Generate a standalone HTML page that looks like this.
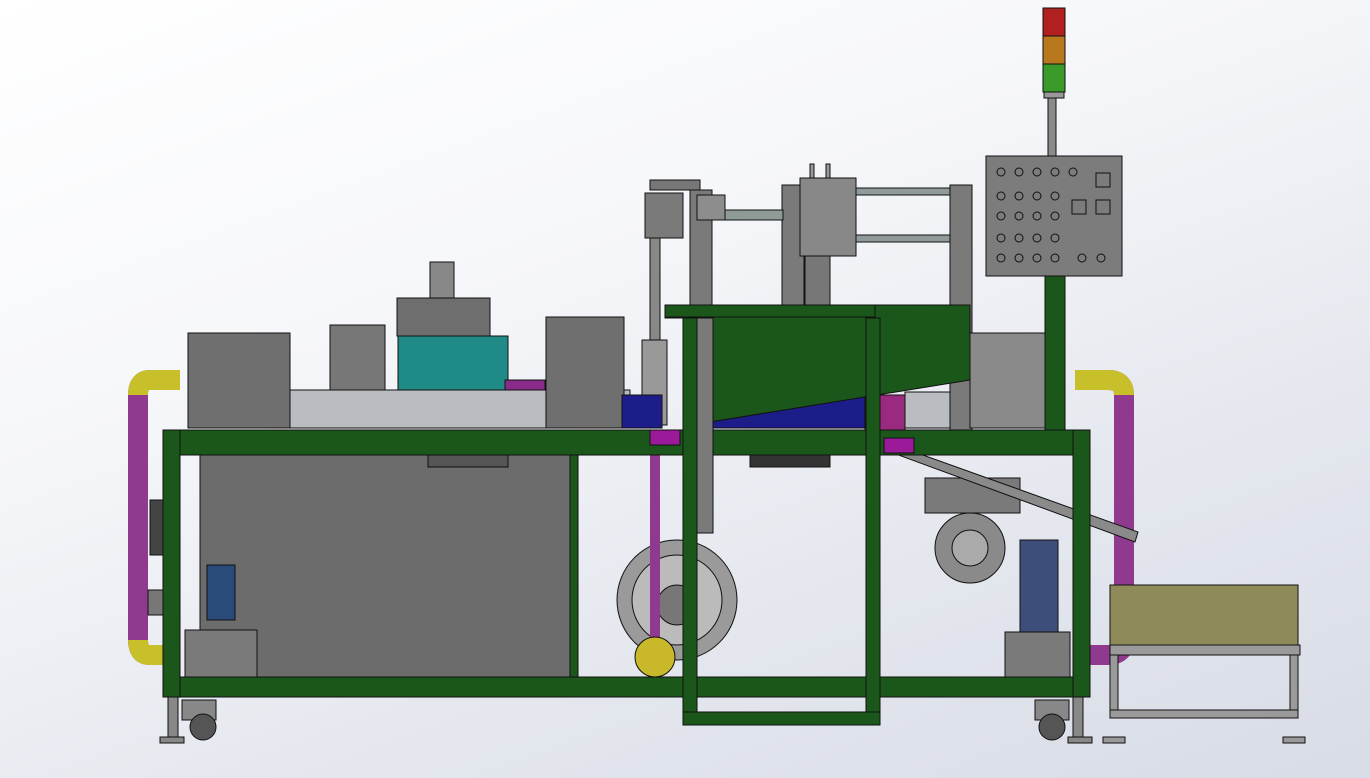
<!DOCTYPE html>
<html><head><style>
html,body{margin:0;padding:0;width:1370px;height:778px;overflow:hidden}
body{background:linear-gradient(160deg,#ffffff 0%,#f6f7fa 35%,#e4e7ee 70%,#d8dce6 100%)}
svg{position:absolute;left:0;top:0}
</style></head><body>
<svg width="1370" height="778" viewBox="0 0 1370 778" xmlns="http://www.w3.org/2000/svg" stroke="#111" stroke-width="1">
<!-- signal tower -->
<rect x="1048" y="95" width="8" height="62" fill="#8a8a8a"/>
<rect x="1043" y="8" width="22" height="28" fill="#b0201e"/>
<rect x="1043" y="36" width="22" height="28" fill="#b8781e"/>
<rect x="1043" y="64" width="22" height="28" fill="#3a9a2a"/>
<rect x="1044" y="92" width="20" height="6" fill="#999"/>
<!-- control panel -->
<rect x="986" y="156" width="136" height="120" fill="#7c7c7c"/>
<g fill="none" stroke="#111">
<circle cx="1001" cy="172" r="4"/><circle cx="1019" cy="172" r="4"/><circle cx="1037" cy="172" r="4"/><circle cx="1055" cy="172" r="4"/><circle cx="1073" cy="172" r="4"/>
<circle cx="1001" cy="196" r="4"/><circle cx="1019" cy="196" r="4"/><circle cx="1037" cy="196" r="4"/><circle cx="1055" cy="196" r="4"/>
<circle cx="1001" cy="216" r="4"/><circle cx="1019" cy="216" r="4"/><circle cx="1037" cy="216" r="4"/><circle cx="1055" cy="216" r="4"/>
<circle cx="1001" cy="238" r="4"/><circle cx="1019" cy="238" r="4"/><circle cx="1037" cy="238" r="4"/><circle cx="1055" cy="238" r="4"/>
<circle cx="1001" cy="258" r="4"/><circle cx="1019" cy="258" r="4"/><circle cx="1037" cy="258" r="4"/><circle cx="1055" cy="258" r="4"/><circle cx="1082" cy="258" r="4"/><circle cx="1101" cy="258" r="4"/>
<rect x="1096" y="173" width="14" height="14"/><rect x="1072" y="200" width="14" height="14"/><rect x="1096" y="200" width="14" height="14"/>
</g>
<rect x="1045" y="276" width="20" height="154" fill="#1b561b"/>
<!-- upper mechanism -->
<rect x="950" y="185" width="22" height="245" fill="#7a7a7a"/>
<rect x="782" y="185" width="22" height="120" fill="#7a7a7a"/>
<rect x="855" y="188" width="95" height="7" fill="#909a9a"/>
<rect x="855" y="235" width="95" height="7" fill="#909a9a"/>
<rect x="800" y="178" width="56" height="78" fill="#888"/>
<rect x="805" y="256" width="25" height="50" fill="#777"/>
<rect x="810" y="164" width="4" height="14" fill="#999"/><rect x="826" y="164" width="4" height="14" fill="#999"/>
<rect x="725" y="210" width="58" height="10" fill="#8f9b97"/>
<rect x="645" y="193" width="38" height="45" fill="#7a7a7a"/>
<rect x="690" y="190" width="22" height="115" fill="#7a7a7a"/>
<rect x="697" y="195" width="28" height="25" fill="#8d8d8d"/>
<rect x="650" y="180" width="50" height="10" fill="#777"/>
<rect x="650" y="238" width="10" height="180" fill="#888"/>
<rect x="642" y="340" width="25" height="85" fill="#999"/>
<!-- left top modules -->
<rect x="430" y="262" width="24" height="36" fill="#888"/>
<rect x="397" y="298" width="93" height="38" fill="#6e6e6e"/>
<rect x="398" y="336" width="110" height="55" fill="#1f8a86"/>
<rect x="330" y="325" width="55" height="100" fill="#777"/>
<rect x="290" y="390" width="340" height="38" fill="#b9bcc0"/>
<rect x="505" y="380" width="40" height="10" fill="#8a2a8a"/>
<rect x="188" y="333" width="102" height="95" fill="#6f6f6f"/>
<rect x="546" y="317" width="78" height="111" fill="#6f6f6f"/>
<rect x="622" y="395" width="40" height="33" fill="#1d1d8a"/>
<rect x="700" y="395" width="250" height="33" fill="#1d1d8a"/>
<rect x="865" y="395" width="40" height="35" fill="#9a2a80"/>
<rect x="970" y="333" width="75" height="95" fill="#8a8a8a"/>
<rect x="905" y="392" width="45" height="36" fill="#b9bcc0"/>
<!-- hopper -->
<polygon points="665,305 970,305 970,380 710,422 700,318 665,318" fill="#1b561b"/>
<rect x="665" y="305" width="210" height="12" fill="#1b561b"/>
<!-- pipes left -->
<path d="M180,380 L150,380 Q138,380 138,395 L138,640 Q138,655 150,655 L180,655" fill="none" stroke="#8f3a8f" stroke-width="20"/>
<path d="M180,380 L150,380 Q138,380 138,395" fill="none" stroke="#c8c02a" stroke-width="20"/>
<path d="M138,640 Q138,655 150,655 L180,655" fill="none" stroke="#c8c02a" stroke-width="20"/>
<!-- pipes right -->
<path d="M1075,380 L1108,380 Q1124,380 1124,395 L1124,640 Q1124,655 1108,655 L1090,655" fill="none" stroke="#8f3a8f" stroke-width="20"/>
<path d="M1075,380 L1108,380 Q1124,380 1124,395" fill="none" stroke="#c8c02a" stroke-width="20"/>
<!-- cabinet -->
<rect x="200" y="455" width="370" height="222" fill="#6c6c6c"/>
<rect x="185" y="630" width="72" height="47" fill="#7a7a7a"/>
<rect x="207" y="565" width="28" height="55" fill="#2a4a7a"/>
<rect x="150" y="500" width="14" height="55" fill="#444"/>
<rect x="148" y="590" width="16" height="25" fill="#777"/>
<!-- blower -->
<circle cx="677" cy="600" r="60" fill="#9a9a9a"/>
<circle cx="677" cy="600" r="45" fill="#bbb"/>
<circle cx="677" cy="605" r="20" fill="#777"/>
<rect x="650" y="455" width="10" height="200" fill="#8f3a8f" stroke="none"/>
<circle cx="655" cy="657" r="20" fill="#c8b82a"/>
<!-- right motor & chute -->
<rect x="925" y="478" width="95" height="35" fill="#7a7a7a"/>
<circle cx="970" cy="548" r="35" fill="#8a8a8a"/>
<circle cx="970" cy="548" r="18" fill="#aaa"/>
<rect x="1020" y="540" width="38" height="92" fill="#3e4e7a"/>
<polygon points="885,450 895,445 1138,532 1135,542" fill="#8a8a8a"/>
<rect x="1005" y="632" width="65" height="45" fill="#7a7a7a"/>
<rect x="750" y="455" width="80" height="12" fill="#333"/>
<rect x="428" y="455" width="80" height="12" fill="#555"/>
<!-- green frame -->
<g fill="#1b561b">
<rect x="163" y="430" width="927" height="25"/>
<rect x="163" y="677" width="927" height="20"/>
<rect x="163" y="430" width="17" height="267"/>
<rect x="1073" y="430" width="17" height="267"/>
<rect x="570" y="455" width="8" height="222"/>
<rect x="683" y="318" width="14" height="407"/>
<rect x="866" y="318" width="14" height="407"/>
<rect x="683" y="712" width="197" height="13"/>
</g>
<rect x="697" y="318" width="16" height="215" fill="#7a7a7a"/>
<rect x="650" y="430" width="30" height="15" fill="#9a1a9a"/>
<rect x="884" y="438" width="30" height="15" fill="#9a1a9a"/>
<!-- casters -->
<g fill="#888">
<rect x="168" y="697" width="10" height="40"/><rect x="182" y="700" width="34" height="20"/>
<circle cx="203" cy="727" r="13" fill="#555"/><rect x="160" y="737" width="24" height="6"/>
<rect x="1073" y="697" width="10" height="40"/><rect x="1035" y="700" width="34" height="20"/>
<circle cx="1052" cy="727" r="13" fill="#555"/><rect x="1068" y="737" width="24" height="6"/>
</g>
<!-- bin -->
<rect x="1110" y="585" width="188" height="60" fill="#8f8a5a"/>
<rect x="1110" y="645" width="190" height="10" fill="#9a9a9a"/>
<rect x="1110" y="655" width="8" height="60" fill="#9a9a9a"/>
<rect x="1290" y="655" width="8" height="60" fill="#9a9a9a"/>
<rect x="1110" y="710" width="188" height="8" fill="#9a9a9a"/>
<rect x="1103" y="737" width="22" height="6" fill="#999"/><rect x="1283" y="737" width="22" height="6" fill="#999"/>
</svg>
</body></html>
